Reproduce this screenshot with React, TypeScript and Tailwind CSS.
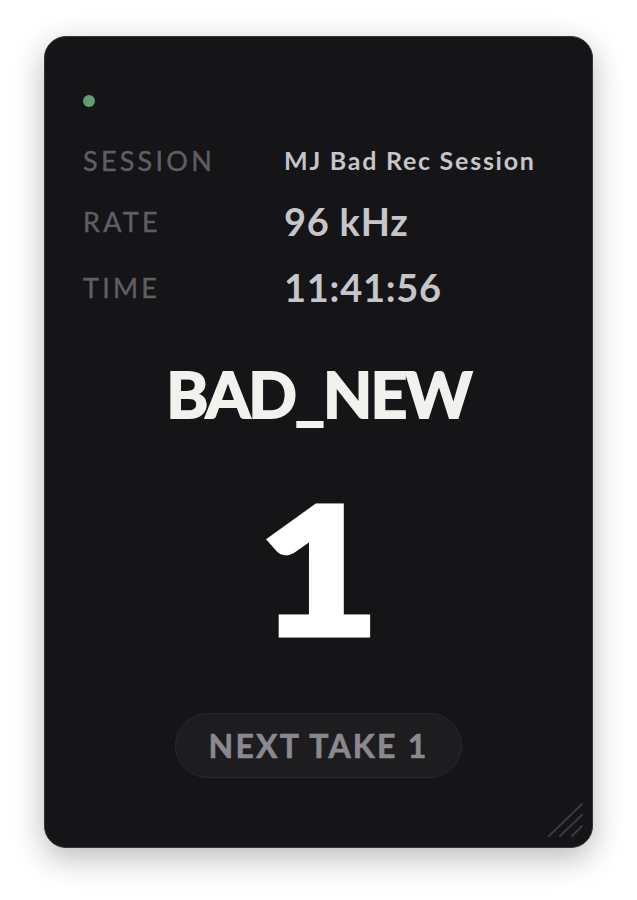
import React from 'react'

const FONT = '[font-family:Lato,"Liberation_Sans",sans-serif]'

function InfoRow(props: { label: string; value: string; big?: boolean }) {
  return (
    <div className={'flex items-center ' + (props.big ? 'h-[44px]' : 'h-[34px]')}>
      <div className="w-[201px] shrink-0 text-[27px] leading-none tracking-[0.12em] text-[#5e5e64] [-webkit-text-stroke:0.4px_#5e5e64]">
        {props.label}
      </div>
      <div
        className={
          'font-bold leading-none text-[#c5c5ca] whitespace-nowrap ' +
          (props.big ? 'text-[38px] tracking-[0.02em]' : 'text-[25px] tracking-[0.07em]')
        }
      >
        {props.value}
      </div>
    </div>
  )
}

function ResizeGrip() {
  return (
    <svg width="36" height="34" viewBox="0 0 36 34" fill="none" stroke="#3a3a3e" strokeWidth="2" strokeLinecap="round">
      <path d="M2 33 35 1" />
      <path d="M13 33 35 12" />
      <path d="M25 33 35 23" />
    </svg>
  )
}

export default function App() {
  return (
    <div className={'min-h-[900px] bg-white pt-[36px] px-[44px] ' + FONT}>
      <div className="relative h-[812px] rounded-[22px] border border-[#34343a] bg-[#151517] shadow-[0_10px_32px_rgba(0,0,0,0.28)] px-[38px] pt-[58px]">
        {/* status dot */}
        <div className="w-[12px] h-[12px] rounded-full bg-[#5f9e73]" />

        <div className="mt-[36px] flex flex-col gap-[22px]">
          <InfoRow label="SESSION" value="MJ Bad Rec Session" />
          <InfoRow label="RATE" value="96 kHz" big />
          <InfoRow label="TIME" value="11:41:56" big />
        </div>

        <div className="mt-[53px] text-center text-[64px] font-bold leading-none tracking-[-0.03em] text-[#f2f1ed] [-webkit-text-stroke:2px_#f2f1ed]">
          BAD_NEW
        </div>

        <div className="mt-[51px] flex justify-center">
          <div className="scale-x-[1.18] text-[178px] font-black leading-none text-white [-webkit-text-stroke:5px_#ffffff]">1</div>
        </div>

        <div className="mt-[58px] flex justify-center">
          <button className="h-[65px] w-[287px] rounded-full border border-[#29292d] bg-[#1d1d20] text-[32px] font-bold tracking-[0.07em] text-[#89898f] [-webkit-text-stroke:0.6px_#89898f]">
            NEXT TAKE 1
          </button>
        </div>

        {/* resize grip */}
        <div className="absolute right-[9px] bottom-[10px]">
          <ResizeGrip />
        </div>
      </div>
    </div>
  )
}
